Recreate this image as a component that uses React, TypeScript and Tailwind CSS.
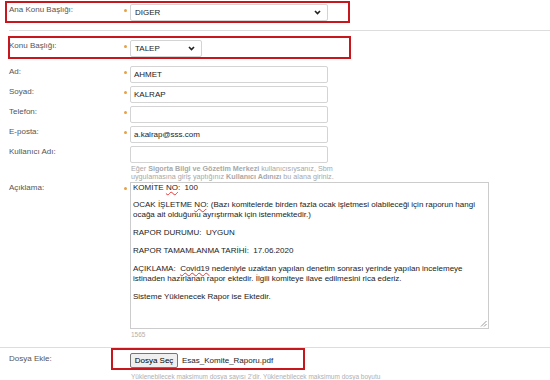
import React from 'react';

const Dot = () => <span className="mt-[5px] ml-[1px] block h-[3px] w-[3px] rounded-full bg-[#e3a24a]" />;

interface RowProps {
  label: string;
  required?: boolean;
  children?: React.ReactNode;
  className?: string;
}

const Row: React.FC<RowProps> = ({ label, required, children, className = '' }) => (
  <div className={`relative flex items-start pl-[9px] ${className}`}>
    <div className="w-[114px] shrink-0 whitespace-nowrap leading-[12px] text-[#555]">{label}</div>
    <div className="w-[7px] shrink-0">{required && <Dot />}</div>
    <div>{children}</div>
  </div>
);

const Chevron = () => (
  <svg width="7" height="5" viewBox="0 0 7 5" className="shrink-0">
    <path d="M1 1 L3.5 3.6 L6 1" fill="none" stroke="#222" strokeWidth="1.6" />
  </svg>
);

const FakeSelect = ({ value, width }: { value: string; width: string }) => (
  <div className={`flex h-[17px] ${width} items-center justify-between rounded-[2px] border border-[#d4d4d4] bg-white pl-[4px] pr-[6px] text-[#222]`}>
    <span>{value}</span>
    <Chevron />
  </div>
);

const TextInput = ({ value = '' }: { value?: string }) => (
  <div className="h-[17px] w-[198px] rounded-[2px] border border-[#d4d4d4] bg-white pl-[3px] leading-[15px] text-[#222]">
    {value}
  </div>
);

// kırmızı işaret kutuları, içeriğin üstünde durur
const Highlight = ({ className }: { className: string }) => (
  <div className={`pointer-events-none absolute border-2 border-[#c8161d] ${className}`} />
);

const Typo = ({ children }: { children: React.ReactNode }) => (
  <span className="underline decoration-[#e53935] decoration-wavy decoration-1 underline-offset-[1px]">{children}</span>
);

export default function App() {
  return (
    <div className="h-[380px] w-[550px] overflow-hidden bg-white font-['Liberation_Sans',Arial,sans-serif] text-[8px]">
      <Row label="Ana Konu Başlığı:" required className="mt-[4px]">
        <FakeSelect value="DIGER" width="w-[198px]" />
        <Highlight className="-top-[3px] left-[5px] h-[22px] w-[345px]" />
      </Row>

      <div className="ml-[9px] mt-[9px] h-px bg-[#dddddd]" />

      <Row label="Konu Başlığı:" required className="mt-[9px]">
        <FakeSelect value="TALEP" width="w-[72px]" />
        <Highlight className="-top-[4px] left-[8px] h-[23px] w-[343px]" />
      </Row>

      <Row label="Ad:" required className="mt-[9px]">
        <TextInput value="AHMET" />
      </Row>
      <Row label="Soyad:" required className="mt-[3px]">
        <TextInput value="KALRAP" />
      </Row>
      <Row label="Telefon:" required className="mt-[3px]">
        <TextInput />
      </Row>
      <Row label="E-posta:" required className="mt-[3px]">
        <TextInput value="a.kalrap@sss.com" />
      </Row>
      <Row label="Kullanıcı Adı:" className="mt-[3px]">
        <TextInput />
        <p className="mt-[2px] ml-[1px] whitespace-nowrap text-[7.2px] leading-[7.5px] text-[#a8a8a8]">
          Eğer <span className="font-bold">Sigorta Bilgi ve Gözetim Merkezi</span> kullanıcısıysanız, Sbm
          <br />
          uygulamasına giriş yaptığınız <span className="font-bold">Kullanıcı Adınızı</span> bu alana giriniz.
        </p>
      </Row>

      <Row label="Açıklama:" required className="mt-[2px]">
        <div className="relative h-[147px] w-[359px] border border-[#cccccc] bg-white pl-[2px] leading-[10px] text-[#222] whitespace-pre">
          <p>KOMİTE <Typo>NO</Typo>:  100</p>
          <p className="mt-[7px]">
            OCAK İŞLETME <Typo>NO</Typo>: (Bazı komitelerde birden fazla ocak işletmesi olabileceği için raporun hangi
            <br />
            ocağa ait olduğunu ayrıştırmak için istenmektedir.)
          </p>
          <p className="mt-[8px]">RAPOR DURUMU:  UYGUN</p>
          <p className="mt-[8px]">RAPOR TAMAMLANMA TARİHİ:  17.06.2020</p>
          <p className="mt-[8px]">
            AÇIKLAMA:  <Typo>Covid19</Typo> nedeniyle uzaktan yapılan denetim sonrası yerinde yapılan incelemeye
            <br />
            istinaden hazırlanan rapor ektedir. İlgili komiteye ilave edilmesini rica ederiz.
          </p>
          <p className="mt-[8px]">Sisteme Yüklenecek Rapor ise Ektedir.</p>
          <svg width="7" height="7" viewBox="0 0 7 7" className="absolute bottom-[1px] right-[1px]">
            <path d="M6.5 1 L1 6.5 M6.5 4 L4 6.5" stroke="#9a9a9a" strokeWidth="1" />
          </svg>
        </div>
        <p className="mt-[2px] ml-[1px] text-[6.5px] leading-[8px] text-[#b0b0b0]">1565</p>
      </Row>

      <div className="mt-[8px] h-px bg-[#dddddd]" />

      <Row label="Dosya Ekle:" className="mt-[5px]">
        <div className="flex items-center">
          <div className="flex h-[15px] w-[48px] items-center justify-center rounded-[2px] border border-[#767676] bg-[#efefef] text-black">
            Dosya Seç
          </div>
          <span className="ml-[4px] text-[#222]">Esas_Komite_Raporu.pdf</span>
        </div>
        <p className="mt-[6px] ml-[1px] whitespace-nowrap text-[6.5px] leading-[6px] text-[#b0b0b0]">
          Yüklenebilecek maksimum dosya sayısı 2'dir. Yüklenebilecek maksimum dosya boyutu
        </p>
        <Highlight className="-top-[5px] left-[111px] h-[22px] w-[194px]" />
      </Row>
    </div>
  );
}
